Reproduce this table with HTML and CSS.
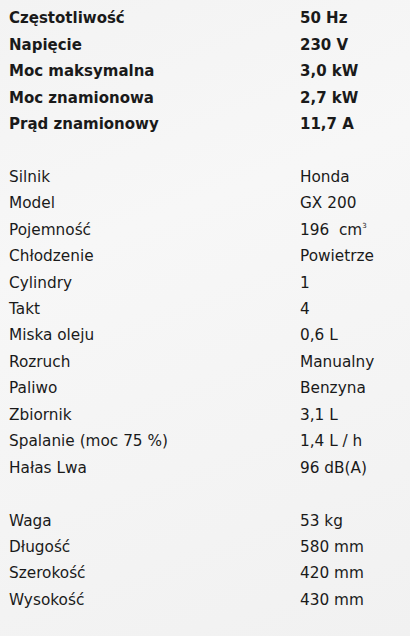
FILE: index.html
```html
<!DOCTYPE html>
<html lang="pl">
<head>
<meta charset="utf-8">
<link rel="stylesheet" href="styles.css">
</head>
<body>
<div class="specs">
  <div class="row bold"><span>Częstotliwość</span><span>50 Hz</span></div>
  <div class="row bold"><span>Napięcie</span><span>230 V</span></div>
  <div class="row bold"><span>Moc maksymalna</span><span>3,0 kW</span></div>
  <div class="row bold"><span>Moc znamionowa</span><span>2,7 kW</span></div>
  <div class="row bold"><span>Prąd znamionowy</span><span>11,7 A</span></div>
  <div class="row"></div>
  <div class="row"><span>Silnik</span><span>Honda</span></div>
  <div class="row"><span>Model</span><span>GX 200</span></div>
  <div class="row"><span>Pojemność</span><span>196&nbsp; cm<sup>3</sup></span></div>
  <div class="row"><span>Chłodzenie</span><span>Powietrze</span></div>
  <div class="row"><span>Cylindry</span><span>1</span></div>
  <div class="row"><span>Takt</span><span>4</span></div>
  <div class="row"><span>Miska oleju</span><span>0,6 L</span></div>
  <div class="row"><span>Rozruch</span><span>Manualny</span></div>
  <div class="row"><span>Paliwo</span><span>Benzyna</span></div>
  <div class="row"><span>Zbiornik</span><span>3,1 L</span></div>
  <div class="row"><span>Spalanie (moc 75 %)</span><span>1,4 L / h</span></div>
  <div class="row"><span>Hałas Lwa</span><span>96 dB(A)</span></div>
  <div class="row"></div>
  <div class="row"><span>Waga</span><span>53 kg</span></div>
  <div class="row"><span>Długość</span><span>580 mm</span></div>
  <div class="row"><span>Szerokość</span><span>420 mm</span></div>
  <div class="row"><span>Wysokość</span><span>430 mm</span></div>
</div>
</body>
</html>
```
FILE: styles.css
```css
html, body {
  margin: 0;
  padding: 0;
  height: 100%;
}
body {
  background: linear-gradient(160deg, #f3f3f3 0%, #f7f7f7 35%, #f1f1f1 100%);
  font-family: "DejaVu Sans", "Noto Sans", sans-serif;
  font-size: 15.3px;
  color: #1a1a1a;
}
.specs {
  padding: 5px 0 0 9px;
}
.row {
  display: grid;
  grid-template-columns: 291px 1fr;
  height: 26.45px;
  align-items: center;
  white-space: nowrap;
}
.row.bold {
  font-weight: bold;
  font-size: 15px;
}
.row sup {
  font-size: 7px;
  line-height: 0;
  vertical-align: 7px;
}
```
